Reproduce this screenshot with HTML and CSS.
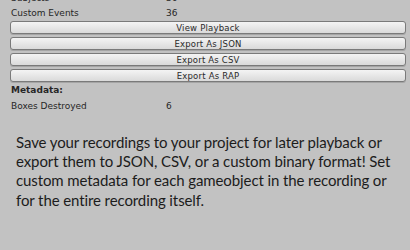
FILE: index.html
```html
<!DOCTYPE html>
<html lang="en">
<head>
  <meta charset="UTF-8" />
  <title>Recording Inspector</title>
  <link rel="stylesheet" href="styles.css">
</head>
<body>

<div class="inspector">
  <div class="row"><span class="label">Subjects</span><span class="value">36</span></div>
  <div class="row"><span class="label">Custom Events</span><span class="value">36</span></div>

  <div class="buttons">
    <button>View Playback</button>
    <button>Export As JSON</button>
    <button>Export As CSV</button>
    <button>Export As RAP</button>
  </div>

  <div class="section-title">Metadata:</div>
  <div class="row"><span class="label">Boxes Destroyed</span><span class="value">6</span></div>
</div>

<p class="blurb">Save your recordings to your project for later playback or export them to JSON, CSV, or a custom binary format! Set custom metadata for each gameobject in the recording or for the entire recording itself.</p>

</body>
</html>
```

FILE: styles.css
```css
* { box-sizing: border-box; }
body {
  margin: 0;
  background: #c2c2c2;
  color: #262626;
  font-family: 'DejaVu Sans', sans-serif;
  overflow: hidden;
}

.inspector {
  margin-top: -10px;
  padding: 0 4px 0 11px;
  font-size: 9px;
}

.row {
  display: flex;
  height: 15px;
  align-items: center;
}

.label {
  width: 155px;
}

.buttons {
  display: flex;
  flex-direction: column;
  gap: 3px;
  margin: 1px 0 1px -1px;
}

.buttons button {
  height: 13px;
  padding: 0;
  font-family: 'DejaVu Sans', sans-serif;
  font-size: 8.5px;
  letter-spacing: 0.2px;
  color: #2a2a2a;
  border: 1px solid #7a7a7a;
  border-radius: 3px;
  background: linear-gradient(#f4f4f4, #dadada);
  box-shadow: 0 1px 0 rgba(0,0,0,0.15);
}

.section-title {
  font-weight: bold;
  height: 15px;
  line-height: 15px;
}

.blurb {
  margin: 20px 6px 0 16px;
  font-family: 'Lato', sans-serif;
  font-size: 15px;
  letter-spacing: -0.1px;
  line-height: 19.2px;
  color: #1c1c1c;
}
```
